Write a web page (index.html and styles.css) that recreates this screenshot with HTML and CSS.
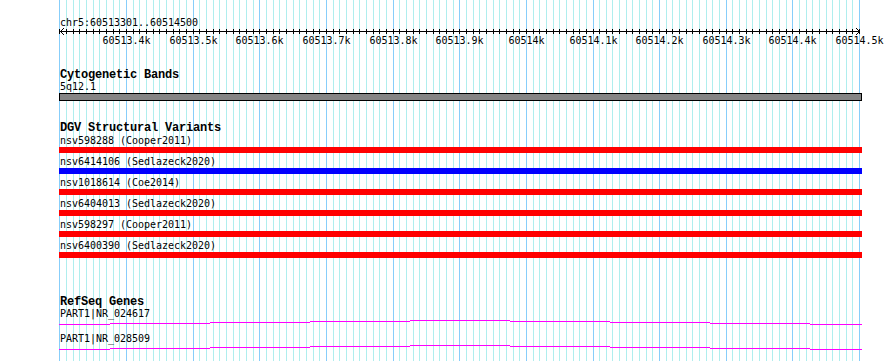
FILE: index.html
```html
<!DOCTYPE html>
<html lang="en">
  <head>
    <meta charset="UTF-8" />
    <meta name="viewport" content="width=device-width, initial-scale=1.0" />
    <title>chr5:60513301..60514500</title>
    <link rel="stylesheet" href="styles.css">
  </head>

  <body>
    <div class="panel">
      <!-- Grid lines behind the tracks (filled in by the script) -->
      <svg class="grid" id="grid" width="890" height="361"></svg>

      <!-- Ruler -->
      <svg class="ruler" id="ruler" width="890" height="46">
        <text x="60" y="26">chr5:60513301..60514500</text>
        <line class="axis" x1="60" y1="31.5" x2="860" y2="31.5" />
        <polyline class="axis" points="64,28 60.5,31.5 64,35" />
        <polyline class="axis" points="856,28 859.5,31.5 856,35" />
      </svg>

      <!-- Cytogenetic bands -->
      <div class="track track-cyto">
        <div class="track-title">Cytogenetic Bands</div>
        <div class="feature-label">5q12.1</div>
        <div class="band"></div>
      </div>

      <!-- DGV structural variants -->
      <div class="track track-dgv">
        <div class="track-title">DGV Structural Variants</div>
        <div class="feature-label">nsv598288 (Cooper2011)</div>
        <div class="bar loss"></div>
        <div class="feature-label">nsv6414106 (Sedlazeck2020)</div>
        <div class="bar gain"></div>
        <div class="feature-label">nsv1018614 (Coe2014)</div>
        <div class="bar loss"></div>
        <div class="feature-label">nsv6404013 (Sedlazeck2020)</div>
        <div class="bar loss"></div>
        <div class="feature-label">nsv598297 (Cooper2011)</div>
        <div class="bar loss"></div>
        <div class="feature-label">nsv6400390 (Sedlazeck2020)</div>
        <div class="bar loss"></div>
      </div>

      <!-- RefSeq genes -->
      <div class="track track-genes">
        <div class="track-title">RefSeq Genes</div>
        <div class="feature-label">PART1|NR_024617</div>
        <svg class="gene-line" width="831" height="13">
          <path d="M0,4.5H51M51,3.5H151M151,2.5H251M251,1.5H351M351,0.5H451M451,1.5H551M551,2.5H651M651,3.5H751M751,4.5H803" />
        </svg>
        <div class="feature-label">PART1|NR_028509</div>
        <svg class="gene-line" width="831" height="13">
          <path d="M0,4.5H51M51,3.5H151M151,2.5H251M251,1.5H351M351,0.5H451M451,1.5H551M551,2.5H651M651,3.5H751M751,4.5H803" />
        </svg>
      </div>
    </div>

    <script>
      const svgNS = "http://www.w3.org/2000/svg";
      const grid = document.getElementById("grid");
      const ruler = document.getElementById("ruler");
      const start = 60513300;

      function addLine(parent, cls, x1, y1, x2, y2) {
        const line = document.createElementNS(svgNS, "line");
        line.setAttribute("class", cls);
        line.setAttribute("x1", x1);
        line.setAttribute("y1", y1);
        line.setAttribute("x2", x2);
        line.setAttribute("y2", y2);
        parent.appendChild(line);
      }

      // one line every 10 bp, a darker one every 100 bp
      for (let i = 0; i <= 120; i++) {
        const x = Math.round(59.3 + i * 6.665) + 0.5;
        const major = i % 10 === 0;

        addLine(grid, major ? "major" : "minor", x, 0, x, 361);
        addLine(ruler, "axis", x, 29, x, 34);

        if (major && i > 0) {
          const label = document.createElementNS(svgNS, "text");
          label.setAttribute("x", x);
          label.setAttribute("y", 44);
          label.setAttribute("class", "tick-label");
          label.textContent = (start + i * 10) / 1000 + "k";
          ruler.appendChild(label);
        }
      }
    </script>
  </body>
</html>
```

FILE: styles.css
```css
body {
  margin: 0;
  background-color: #ffffff;
}

.panel {
  position: relative;
  isolation: isolate;
  width: 890px;
  height: 361px;
  overflow: hidden;
  font-family: "Liberation Mono", "DejaVu Sans Mono", monospace;
  color: #000000;
}

/* Grid sits behind everything */
.grid {
  position: absolute;
  left: 0;
  top: 0;
  z-index: -1;
}

.grid .minor {
  stroke: #afeeee;
}

.grid .major {
  stroke: #87cefa;
}

.ruler {
  display: block;
}

.ruler text {
  font-family: "DejaVu Sans Mono", monospace;
  font-size: 10px;
  letter-spacing: -0.02px;
  fill: #000000;
}

.ruler .tick-label {
  text-anchor: middle;
}

.axis {
  stroke: #000000;
  fill: none;
}

.track {
  padding-left: 59px;
}

.track-cyto {
  padding-top: 23px;
}

.track-dgv {
  padding-top: 21px;
}

.track-genes {
  padding-top: 35px;
}

.track-title {
  height: 12px;
  padding-left: 1px;
  font-size: 12px;
  font-weight: bold;
  line-height: 12px;
  letter-spacing: -0.2px;
  white-space: pre;
}

.track-dgv .track-title {
  height: 13px;
}

.feature-label {
  height: 12px;
  padding-left: 1px;
  font-family: "DejaVu Sans Mono", monospace;
  font-size: 10px;
  line-height: 12px;
  letter-spacing: -0.02px;
  white-space: pre;
}

/* Cytoband */
.band {
  width: 801px;
  height: 6px;
  border: 1px solid #000000;
  background-color: #858585;
}

/* DGV bars */
.bar {
  width: 803px;
  height: 6px;
  margin-bottom: 3px;
}

.bar.loss {
  background-color: #ff0000;
}

.bar.gain {
  background-color: #0000ff;
}

/* Gene models */
.gene-line {
  display: block;
}

.gene-line path {
  stroke: #ff00ff;
  fill: none;
}
```
